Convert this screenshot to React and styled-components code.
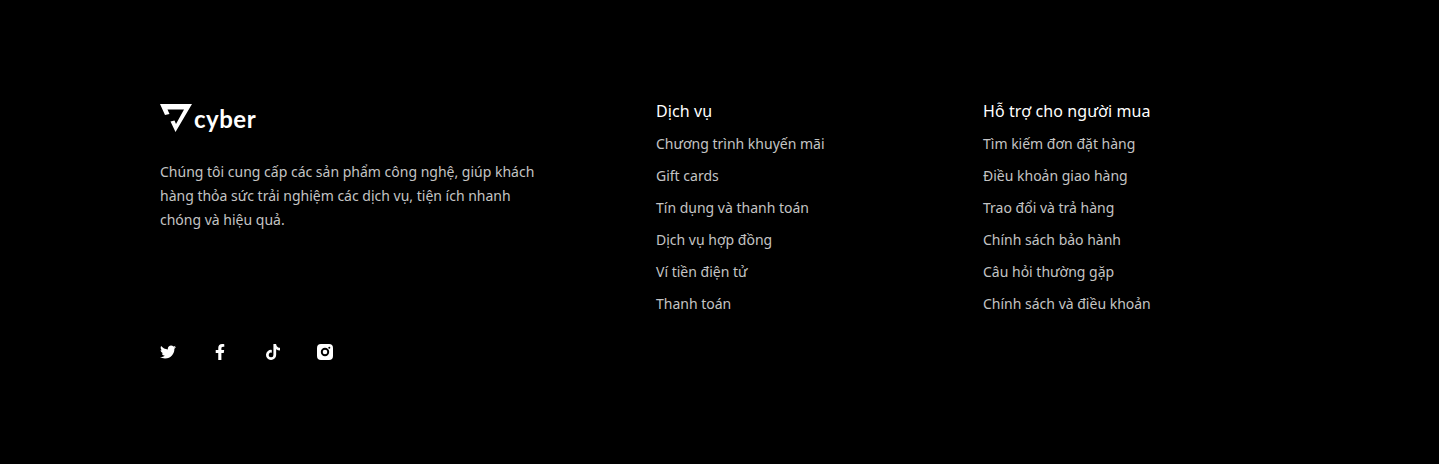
import React from 'react';
import styled, { createGlobalStyle } from 'styled-components';
import { FaTwitter, FaFacebookF, FaTiktok } from 'react-icons/fa';

const GlobalStyle = createGlobalStyle`
  html, body {
    margin: 0;
    padding: 0;
    background: #000;
  }
`;

const Footer = styled.footer`
  box-sizing: border-box;
  height: 464px;
  padding: 104px 159px 0 160px;
  background: #000;
  font-family: 'Noto Sans', sans-serif;
  display: grid;
  grid-template-columns: 496px 327px 1fr;
`;

const Brand = styled.div`
  display: flex;
  flex-direction: column;
`;

const Logo = styled.div`
  display: flex;
  align-items: flex-end;
  height: 28px;
  gap: 1px;
`;

const LogoText = styled.span`
  color: #fff;
  font-family: 'Lato', sans-serif;
  font-weight: 700;
  font-size: 24px;
  line-height: 26px;
  letter-spacing: 0.5px;
`;

const About = styled.p`
  margin: 28px 0 0;
  width: 380px;
  color: #c4c4c4;
  font-size: 14px;
  line-height: 24px;
`;

const Socials = styled.div`
  display: flex;
  gap: 36.3px;
  margin-top: 112px;
  color: #fff;
`;

const SocialIcon = styled.span`
  display: flex;
  align-items: center;
  justify-content: center;
  width: 16px;
  height: 16px;
  font-size: 16px;
`;

const Column = styled.div`
  display: flex;
  flex-direction: column;
`;

const ColumnTitle = styled.h4`
  margin: 0 0 10px;
  color: #fff;
  font-size: 16px;
  font-weight: 400;
  line-height: 14px;
  letter-spacing: 0.1px;
`;

const LinkList = styled.ul`
  list-style: none;
  margin: 0;
  padding: 0;
`;

const LinkItem = styled.li`
  height: 32px;
  color: #c4c4c4;
  font-size: 14px;
  line-height: 32px;
`;

const columns = [
  {
    title: 'Dịch vụ',
    links: ['Chương trình khuyến mãi', 'Gift cards', 'Tín dụng và thanh toán', 'Dịch vụ hợp đồng', 'Ví tiền điện tử', 'Thanh toán'],
  },
  {
    title: 'Hỗ trợ cho người mua',
    links: ['Tìm kiếm đơn đặt hàng', 'Điều khoản giao hàng', 'Trao đổi và trả hàng', 'Chính sách bảo hành', 'Câu hỏi thường gặp', 'Chính sách và điều khoản'],
  },
];

const LogoMark = () => (
  <svg width="33" height="28" viewBox="0 0 33 28" fill="#fff">
    <path d="M0 0H32L15.5 28L10.5 17.5L14.5 16.5L16 20L24 5.5H7.5L9.5 10L5 11Z" />
  </svg>
);

const InstagramIcon = () => (
  <svg width="16" height="16" viewBox="0 0 16 16">
    <path
      fill="#fff"
      fillRule="evenodd"
      d="M4 0H12A4 4 0 0 1 16 4V12A4 4 0 0 1 12 16H4A4 4 0 0 1 0 12V4A4 4 0 0 1 4 0ZM8 3.8A4.2 4.2 0 1 0 8 12.2A4.2 4.2 0 1 0 8 3.8ZM8 5.7A2.3 2.3 0 1 1 8 10.3A2.3 2.3 0 1 1 8 5.7ZM12.3 2.7A1 1 0 1 0 12.3 4.7A1 1 0 1 0 12.3 2.7Z"
    />
  </svg>
);

const App = () => (
  <>
    <GlobalStyle />
    <Footer>
      <Brand>
        <Logo>
          <LogoMark />
          <LogoText>cyber</LogoText>
        </Logo>
        <About>
          Chúng tôi cung cấp các sản phẩm công nghệ, giúp khách hàng thỏa sức trải nghiệm các dịch vụ, tiện ích nhanh
          chóng và hiệu quả.
        </About>
        <Socials>
          <SocialIcon><FaTwitter /></SocialIcon>
          <SocialIcon><FaFacebookF /></SocialIcon>
          <SocialIcon><FaTiktok /></SocialIcon>
          <SocialIcon><InstagramIcon /></SocialIcon>
        </Socials>
      </Brand>
      {columns.map((column) => (
        <Column key={column.title}>
          <ColumnTitle>{column.title}</ColumnTitle>
          <LinkList>
            {column.links.map((link) => (
              <LinkItem key={link}>{link}</LinkItem>
            ))}
          </LinkList>
        </Column>
      ))}
    </Footer>
  </>
);

export default App;
